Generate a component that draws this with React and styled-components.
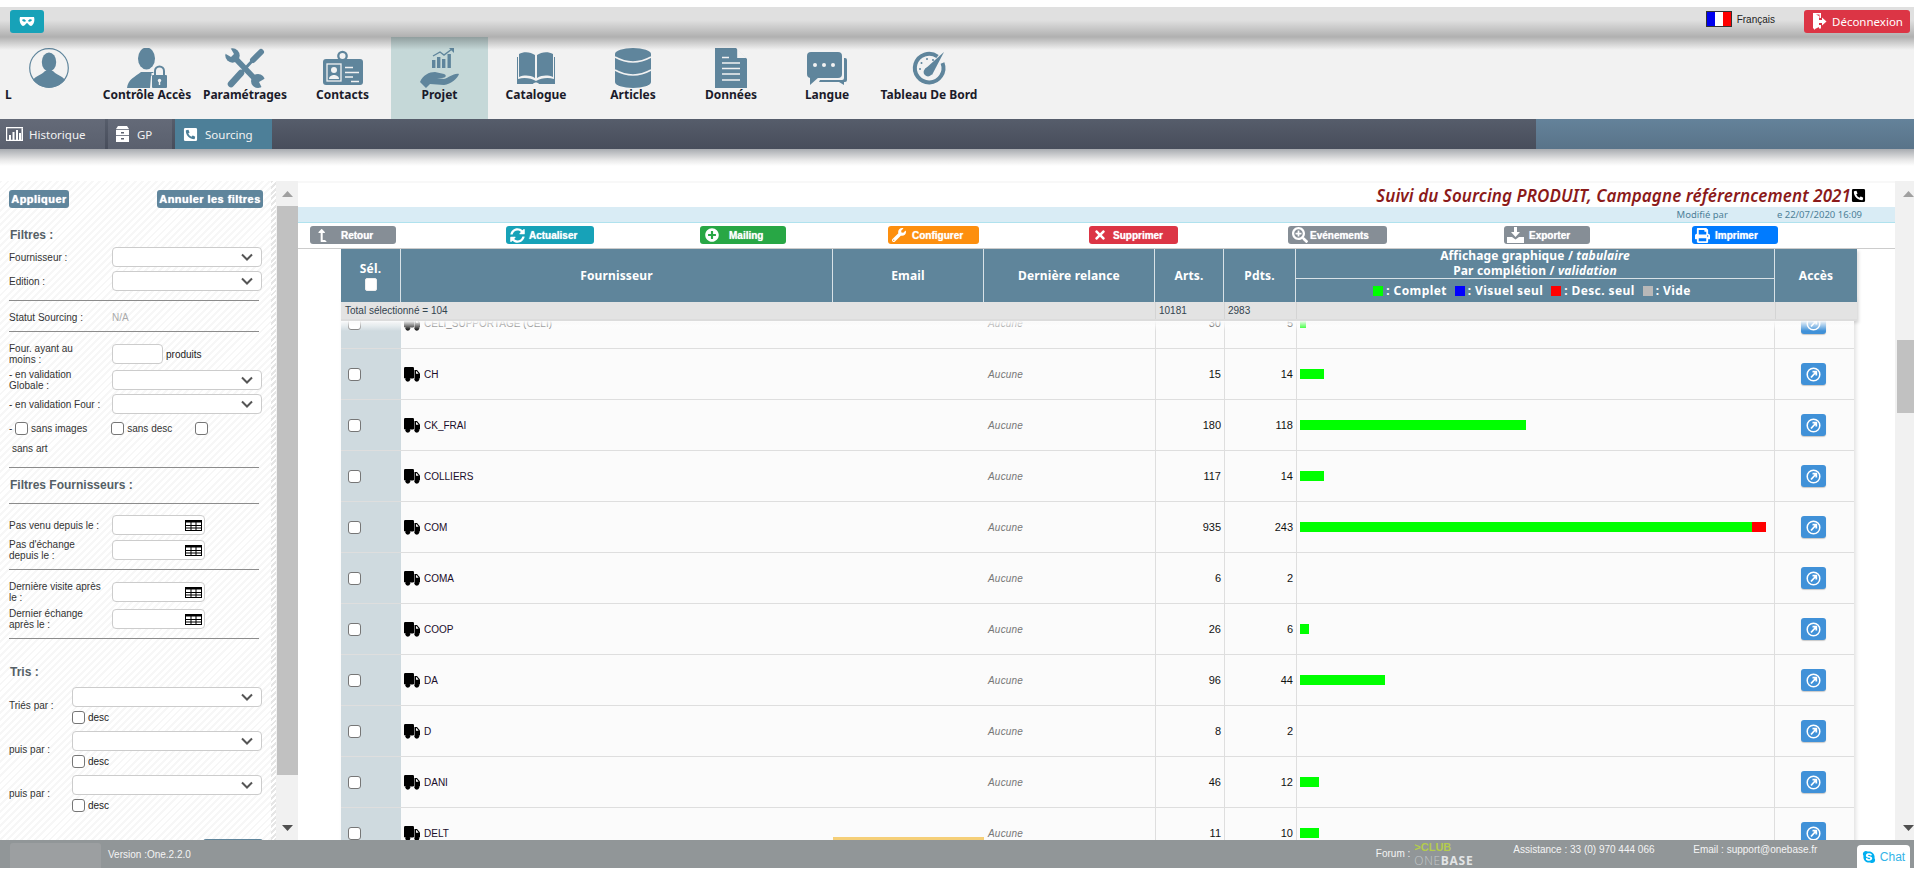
import React from "react";
import styled, { createGlobalStyle } from "styled-components";
import { FaSyncAlt, FaPlusCircle, FaWrench, FaTimes, FaSearchPlus, FaPrint, FaLevelUpAlt, FaPhoneSquareAlt, FaSkype } from "react-icons/fa";

const Global = createGlobalStyle`
  html, body { margin: 0; padding: 0; background: #fff; overflow: hidden; }
  * { box-sizing: border-box; }
`;
const BLUE = "#5f859c";
const Page = styled.div`
  width: 1914px; height: 876px; overflow: hidden; padding-top: 7px;
  display: flex; flex-direction: column; background: #fff;
  font-family: "Liberation Sans", Arial, sans-serif;
`;
const TopBar = styled.header`
  height: 30px; flex: none; display: flex; justify-content: space-between; padding: 3px 4px 0 10px;
  background: linear-gradient(#e0e0e0 0, #e0e0e0 13px, #b0b0b0 100%);
`;
const MaskButton = styled.button`
  width: 34px; height: 23px; border: 0; border-radius: 3px; background: #17a2b8; padding: 0;
  display: flex; align-items: center; justify-content: center;
`;
const TopRight = styled.div`display: flex;`;
const Lang = styled.div`
  display: flex; align-items: center; gap: 5px; font: 10px "Liberation Sans", sans-serif; color: #222; margin-right: 29px; margin-top: 1px; height: 16px;
`;
const LogoutButton = styled.button`
  width: 106px; height: 23px; border: 0; border-radius: 3px; background: #dc3545; color: #fff;
  display: flex; align-items: center; gap: 5px; padding: 0 0 0 9px; font: 11.5px "Noto Sans", sans-serif; white-space: nowrap;
`;
const Nav = styled.nav`
  height: 82px; flex: none; background: #f2f2f2; display: flex; position: relative;
  &::before { content: ""; position: absolute; left: 0; right: 0; top: 0; height: 13px; background: linear-gradient(rgba(0,0,0,.27), rgba(0,0,0,0)); }
`;
const NavItem = styled.div`
  width: ${p => p.$w}px; flex: none; padding-top: 11px; display: flex; flex-direction: column; align-items: center;
  background: ${p => (p.$active ? "#c5d8d8" : "transparent")};
`;
const NavLabel = styled.span`
  font: bold 12px/14px "Noto Sans", sans-serif; color: #1b1b2a; white-space: nowrap;
  align-self: ${p => (p.$left ? "flex-start" : "center")}; padding-left: ${p => (p.$left ? "5px" : "0")};
`;
const SubBar = styled.div`
  height: 30px; flex: none; display: flex; background: linear-gradient(#565d6b, #474d5b);
`;
const SubFill = styled.div`flex: 1;`;
const SubEnd = styled.div`width: 378px; background: linear-gradient(#64829a, #597389);`;
const Tab = styled.div`
  width: ${p => p.$w}px; margin-right: ${p => (p.$active ? 0 : 3)}px; display: flex; align-items: center; gap: ${p => p.$gap}px; padding-left: ${p => p.$pl}px;
  font: 11.5px "Noto Sans", sans-serif; color: #f2f2f2;
  background: ${p => (p.$active ? "#4d7f98" : "linear-gradient(#646a78,#5a606e)")};
`;
const ShadowBand = styled.div`
  height: 32px; flex: none; background: linear-gradient(#a8abb0 0, #e8e8e8 11px, #fff 17px);
`;
const Main = styled.main`height: 659px; flex: none; display: flex; overflow: hidden;`;
const Sidebar = styled.aside`
  width: 276px; flex: none; padding: 9px 13px 0 9px; display: flex; flex-direction: column; overflow: hidden;
  background:
    repeating-linear-gradient(135deg, #e6e6e6 0 2px, #fff 2px 4px) right / 5px 100% no-repeat,
    repeating-linear-gradient(135deg, #f7f7f7 0 2px, #fff 2px 5px);
  font-size: 10px; color: #333;
`;
const ActionRow = styled.div`display: flex; justify-content: space-between; flex: none;`;
const ActionButton = styled.button`
  height: 18px; width: ${p => p.$w}px; border: 0; border-radius: 3px; background: ${BLUE}; color: #fff; padding: 0; flex: none;
  font: bold 11px "Liberation Sans", sans-serif; letter-spacing: .45px; text-shadow: 0 0 1px #fff;
  margin-top: ${p => p.$mt || 0}px; align-self: flex-end;
`;
const SideTitle = styled.h3`
  margin: ${p => p.$mt}px 0 0 1px; height: 20px; flex: none; font: bold 12px/20px "Liberation Sans", sans-serif; color: #555f66;
`;
const Rule = styled.hr`
  margin: ${p => p.$mt}px 0 0; width: 250px; height: 1px; border: 0; background: #8c8c8c; flex: none;
`;
const Field = styled.div`
  margin-top: ${p => p.$mt}px; display: grid; grid-template-columns: 103px 150px; align-items: center; flex: none; height: 20px; line-height: 11px;
`;
const FieldLabel = styled.span`max-width: 92px;`;
const SelectBox = styled.div`
  height: 20px; background: #fff; border: 1px solid #ccc; border-radius: 4px; display: flex; align-items: center; justify-content: flex-end; padding-right: 8px;
`;
const Muted = styled.span`color: #aaa;`;
const NumberWrap = styled.div`display: flex; align-items: center; gap: 3px; color: #222;`;
const TextBox = styled.div`
  height: 20px; width: ${p => p.$w}px; background: #fff; border: 1px solid #ccc; border-radius: 4px;
  display: flex; align-items: center; justify-content: flex-end; padding-right: 2px;
`;
const Check = styled.input.attrs({ type: "checkbox", readOnly: true })`
  appearance: none; width: 13px; height: 13px; margin: 0; flex: none; background: #fff; border: 1px solid #767676; border-radius: 3px;
`;
const CheckRow = styled.div`
  margin-top: ${p => p.$mt}px; height: 13px; display: flex; align-items: center; flex: none;
`;
const CheckLabel = styled.span`margin: 0 ${p => p.$mr}px 0 3px;`;
const Plain = styled.div`margin: 7px 0 0 3px; height: 13px; line-height: 13px; flex: none;`;
const SortRow = styled.div`
  margin-top: ${p => p.$mt}px; display: grid; grid-template-columns: 63px 190px; align-items: center; flex: none;
`;
const SortStack = styled.div`display: flex; flex-direction: column; gap: 4px;`;
const DescLine = styled.div`display: flex; align-items: center; gap: 3px; color: #222; height: 13px;`;
const Gutter = styled.div`
  width: ${p => p.$w}px; flex: none; background: #f1f1f1; display: flex; flex-direction: column; padding-left: ${p => p.$pl}px;
`;
const ArrowSlot = styled.div`
  height: 25px; flex: none; display: flex; align-items: center; justify-content: ${p => p.$end ? "flex-start" : "center"}; padding-left: ${p => p.$end ? "6px" : 0};
`;
const Thumb = styled.div`
  height: ${p => p.$h}px; margin-top: ${p => p.$mt}px; background: #c1c1c1; flex: none;
`;
const Spacer = styled.div`flex: 1;`;
const Content = styled.section`flex: 1; min-width: 0; display: flex; flex-direction: column; background: #fff;`;
const TitleRow = styled.div`
  height: 26px; flex: none; display: flex; align-items: center; justify-content: flex-end; padding-right: 29px; border-top: 2px solid #f8f8f8;
`;
const PageTitle = styled.h1`
  margin: 0; font: italic 600 17px "Noto Sans", sans-serif; color: #8b1a1a; white-space: nowrap; letter-spacing: .08px;
`;
const InfoStrip = styled.div`
  height: 16px; flex: none; background: #d9ecf5; border-bottom: 1px solid #b0e2ee; display: flex; justify-content: flex-end; align-items: center;
  padding-right: 33px; font: 9.5px "Noto Sans", sans-serif; color: #4d7f98; gap: 49px;
`;
const Toolbar = styled.div`
  height: 26px; flex: none; border-bottom: 1px solid #ccc; display: flex; padding: 3px 0 0 12px;
`;
const ToolButton = styled.button`
  width: ${p => p.$w}px; height: 18px; margin-left: ${p => p.$ml}px; padding: 0 0 0 ${p => p.$pl}px; border: 0; border-radius: 3px;
  background: ${p => p.$bg}; color: #fff; display: flex; align-items: center; gap: ${p => p.$gap}px; flex: none;
  font: bold 10px "Liberation Sans", sans-serif; text-shadow: 0 0 1px rgba(255,255,255,.8); white-space: nowrap;
`;
const TableArea = styled.div`flex: 1; min-height: 0; overflow: hidden; margin-top: -3px; padding: 3px 0 0 43px;`;
const COLS = "60px 432px 151px 171px 69px 72px 479px";
const Head = styled.div`position: relative; z-index: 2; width: 1516px;
  box-shadow: 2px 2px 3px rgba(0,0,0,.12);
  &::after { content: ""; position: absolute; left: 0; width: 1513px; top: 100%; height: 10px; background: linear-gradient(rgba(255,255,255,.95), rgba(255,255,255,0)); }
`;
const HeadRow = styled.div`
  display: grid; grid-template-columns: ${COLS} 82px; height: 53px; background: #5f859b; color: #fff;
  font: bold 12px "Noto Sans", sans-serif; letter-spacing: .15px;
`;
const HeadCell = styled.div`
  display: flex; flex-direction: column; align-items: center; justify-content: center; border-right: ${p => (p.$last ? 0 : "1px solid #d8e2e7")}; gap: ${p => p.$gap || 0}px;
`;
const HeadBox = styled.input.attrs({ type: "checkbox", readOnly: true })`
  appearance: none; width: 12px; height: 13px; margin: 0; background: #fff; border: 1px solid #eee; border-radius: 2px;
`;
const ChartHead = styled.div`display: flex; flex-direction: column; border-right: 1px solid #d8e2e7;`;
const ChartTitle = styled.div`
  height: 30px; border-bottom: 1px solid #d8e2e7; text-align: center; white-space: nowrap;
  em { font-style: italic; }
`;
const ChartTitleLine = styled.div`margin-top: ${p => p.$mt}px; line-height: 13px;`;
const Legend = styled.div`flex: 1; display: flex; align-items: center; justify-content: center; gap: 3px; padding-right: 6px; white-space: nowrap; letter-spacing: .4px;`;
const LegendSwatch = styled.i`
  width: 10px; height: 10px; background: ${p => p.$c}; margin-left: ${p => p.$ml || 0}px; flex: none;
`;
const TotalRow = styled.div`
  display: grid; grid-template-columns: ${COLS} 82px; height: 19px; background: #e3e3e3; border-bottom: 2px solid #dcdcdc; font-size: 10px; color: #33444f; line-height: 17px;
`;
const TotalLabel = styled.div`padding-left: 4px; grid-column: 1 / span 4; white-space: nowrap;`;
const TotalNum = styled.div`padding-left: 3px; border-left: 1px solid #d4d4d4;`;
const Rows = styled.div`margin-top: -23px; width: 1513px; box-shadow: 2px 0 4px rgba(0,0,0,.12);`;
const Row = styled.div`
  display: grid; grid-template-columns: ${COLS} 79px; height: 51px; background: #fbfbfb; border-bottom: 1px solid #dedede; align-items: stretch;
`;
const SelCell = styled.div`
  background: #cfdadf; display: flex; align-items: center; padding-left: 7px;
`;
const NameCell = styled.div`
  display: flex; align-items: center; gap: 4px; padding-left: 3px; font-size: 10px; color: ${p => (p.$faded ? "#555" : "#1a0d2a")}; white-space: nowrap;
`;
const EmailCell = styled.div`display: flex; align-items: flex-end;`;
const Banner = styled.div`width: 100%; height: 4px; margin-bottom: 17px; background: #f5cf78;`;
const DateCell = styled.div`
  display: flex; align-items: center; padding-left: 4px; font: italic 10px "Liberation Sans", sans-serif; color: #777; letter-spacing: .2px;
`;
const NumCell = styled.div`
  display: flex; align-items: center; justify-content: flex-end; padding-right: 3px; font-size: 11px; color: #111; border-left: 1px solid #dedede;
`;
const BarCell = styled.div`
  display: flex; align-items: center; padding-left: 3px; border-left: 1px solid #dedede; border-right: 1px solid #dedede;
`;
const BarPart = styled.i`height: 10px; background: ${p => p.$c}; display: block; flex: none;`;
const AccessCell = styled.div`display: flex; align-items: center; padding-left: 26px;`;
const AccessButton = styled.button`
  width: 25px; height: 22px; padding: 0; border: 0; border-radius: 3px; background: #4091d8; display: flex; align-items: center; justify-content: center;
  box-shadow: 0 1px 1px rgba(0,0,0,.2);
`;
const Footer = styled.footer`
  height: 28px; flex: none; background: #919698; display: flex; color: #f4f4f4; font-size: 10px;
`;
const FooterBlock = styled.div`width: 91px; height: 25px; margin: 3px 0 0 10px; background: #9c9fa1; border-radius: 3px 3px 0 0;`;
const FooterText = styled.span`
  margin-left: ${p => p.$ml}px; padding-top: ${p => p.$pt}px; white-space: nowrap; flex: none; width: ${p => p.$w ? p.$w + "px" : "auto"};
`;
const LogoBox = styled.div`
  width: 60px; margin-left: 4px; flex: none; display: flex; flex-direction: column; line-height: 12px; padding-top: 1px; white-space: nowrap;
`;
const LogoClub = styled.span`color: #b4cc4c; font: bold 11px/13px "Liberation Sans", sans-serif;`;
const LogoBase = styled.span`
  color: #c4c8ca; font: 300 12px/13px "Open Sans", sans-serif; letter-spacing: .7px;
  b { font-weight: 700; color: #e3e5e6; }
`;
const ChatButton = styled.div`
  margin-left: auto; margin-right: 4px; margin-top: 5px; width: 53px; height: 23px; background: #fff; border-radius: 4px 4px 0 0;
  display: flex; align-items: center; justify-content: center; gap: 4px; color: #33b4e8; font-size: 12px; flex: none;
`;

const F = p => <svg width="40" height="40" viewBox="0 0 40 40" fill={BLUE} style={{ flex: "none" }} {...p} />;
const BG = "#f2f2f2";
const AvatarIcon = () => (<F><circle cx="20" cy="20" r="19.3" fill="none" stroke={BLUE} strokeWidth="1.2" />
  <ellipse cx="20" cy="14" rx="7.2" ry="9.5" /><path d="M4 32C6 28 13 27 16 23L24 23C27 27 34 28 36 32C32 37 26 39.5 20 39.5C14 39.5 8 37 4 32Z" /></F>);
const AccessIcon = () => (<F><ellipse cx="19.5" cy="10.5" rx="8.5" ry="11" /><path d="M0 40C1 31 8 29 14 24L26 24C27 26 29 27 31 28L24 28L23 40Z" />
  <rect x="24.5" y="25" width="16" height="15" fill={BG} /><rect x="25" y="27" width="15" height="13" rx="1" />
  <path d="M28 27v-4a4.5 4.5 0 0 1 9 0v4" fill="none" stroke={BLUE} strokeWidth="2" /><circle cx="32.5" cy="32.5" r="1.7" fill={BG} /><rect x="31.8" y="33" width="1.4" height="4" fill={BG} /></F>);
const ToolsIcon = () => (<F><g stroke={BLUE} strokeLinecap="round" fill="none">
  <path d="M6 36 16 25" strokeWidth="6.5" /><path d="M16 25 28 12" strokeWidth="3" /><path d="M28 12 36 4" strokeWidth="6" /></g>
  <path d="M9 9 32 33" stroke={BLUE} strokeWidth="5.5" />
  <circle cx="7.5" cy="7.5" r="7.2" /><circle cx="33" cy="33" r="7" />
  <path d="M5 -1 9 6 6 9 -1 5 0 -1Z" fill={BG} /><path d="M41 30 34 34 37 40 41 41Z" fill={BG} /></F>);
const BadgeIcon = () => (<F><circle cx="19.5" cy="8" r="4.2" fill="none" stroke={BLUE} strokeWidth="2.3" />
  <rect x="0" y="11" width="40" height="26" rx="3" /><rect x="4" y="16" width="14" height="17" fill="none" stroke={BG} strokeWidth="1.3" />
  <circle cx="11" cy="22" r="3" fill={BG} /><path d="M6 31c0-3 3-4 5-4s5 1 5 4Z" fill={BG} />
  <path d="M22 19.5h8M22 24.5h14M22 29h8M28 33.5h8" stroke={BG} strokeWidth="1.4" /></F>);
const ProjectIcon = () => (<svg width="40" height="40" viewBox="0 0 40 40" fill={BLUE}>
  <rect x="12" y="12" width="3.4" height="8" /><rect x="17" y="9" width="3.4" height="11" /><rect x="22" y="11" width="3.4" height="9" /><rect x="27.5" y="6" width="3.4" height="14" />
  <path d="M13 8 20 4 24 7 32 1" fill="none" stroke={BLUE} strokeWidth="1.4" /><path d="M29 0h5v5Z" />
  <path d="M0 34C3 27 9 24 15 24L24 26C27 27 26 30 22 30L17 30L24 31C29 30 33 25 39 26C38 30 31 36 24 37L10 36L6 40Z" /></svg>);
const BookIcon = () => (<F><path d="M3 6C8 3 15 4 19 7V30C14 27 8 27 3 29Z" /><path d="M37 6C32 3 25 4 21 7V30C26 27 32 27 37 29Z" />
  <path d="M1 9V36H17C18 34 22 34 23 36H39V9H38V31C32 29 25 30 20 33C15 30 8 29 2 31V9Z" /></F>);
const DbIcon = () => (<F><path d="M2 6a18 6 0 0 1 36 0V34a18 6 0 0 1-36 0Z" /><path d="M2 9Q20 19 38 9M2 22Q20 32 38 22" fill="none" stroke={BG} strokeWidth="1.6" /></F>);
const DocIcon = () => (<F><path d="M4 0H25L36 11V40H4Z" /><path d="M26.2 .5V10H35.5Z" fill={BG} /><path d="M11 9.5h7M11 15h18M11 20.5h18M11 26h18M11 32h18" stroke={BG} strokeWidth="1.3" /></F>);
const ChatIcon = () => (<F><rect x="0" y="4" width="35" height="26" rx="4" /><path d="M3 28V37L12 29Z" />
  <path d="M37 10h1a2 2 0 0 1 2 2v20a2 2 0 0 1-2 2h-1v3L32 34H12L13 32H35a2 2 0 0 0 2-2Z" /><circle cx="8" cy="17" r="2" fill={BG} /><circle cx="17" cy="17" r="2" fill={BG} /><circle cx="26" cy="17" r="2" fill={BG} /></F>);
const GaugeIcon = () => (<F><path d="M28.5 8.5A14.3 14.3 0 1 0 33.5 15" fill="none" stroke={BLUE} strokeWidth="4" />
  <path d="M16 21 35 4 23 27Z" /><circle cx="19" cy="24" r="4.4" />
  <circle cx="11" cy="21" r="1" /><circle cx="12.5" cy="15" r="1" /><circle cx="18" cy="11" r="1" /><circle cx="24" cy="12" r="1" /></F>);
const navItems = [
  { l: "L", I: AvatarIcon, w: 98 }, { l: "Contrôle Accès", I: AccessIcon, w: 98 }, { l: "Paramétrages", I: ToolsIcon, w: 98 },
  { l: "Contacts", I: BadgeIcon, w: 97 }, { l: "Projet", I: ProjectIcon, w: 97 }, { l: "Catalogue", I: BookIcon, w: 96 },
  { l: "Articles", I: DbIcon, w: 98 }, { l: "Données", I: DocIcon, w: 98 }, { l: "Langue", I: ChatIcon, w: 94 }, { l: "Tableau De Bord", I: GaugeIcon, w: 110 },
];

const Chevron = () => (<svg width="12" height="8" viewBox="0 0 12 8"><path d="M1 1.5 6 6.5 11 1.5" fill="none" stroke="#555" strokeWidth="2" /></svg>);
const Calendar = () => (<svg width="17" height="11" viewBox="0 0 17 11"><rect x=".5" y=".5" width="16" height="10" fill="#fff" stroke="#000" /><rect width="17" height="2.5" /><path d="M0 5.500h17M0 8h17M6 0v11M11 0v11" stroke="#000" /></svg>);
const Up = () => (<svg width="11" height="6" viewBox="0 0 11 6"><path d="M5.5 0 11 6H0Z" fill="#a0a0a0" /></svg>);
const Down = () => (<svg width="11" height="6" viewBox="0 0 11 6"><path d="M5.5 6 11 0H0Z" fill="#505050" /></svg>);
const MaskIcon = () => (<svg width="16" height="9" viewBox="0 0 16 9"><path fillRule="evenodd" fill="#fff" d="M1 0H15C16 3 15 8 12 9C10 9 9 6 8 6C7 6 6 9 4 9C1 8 0 3 1 0ZM3 3C4 5 6 5 7 4C6 2 4 2 3 3ZM13 3C12 5 10 5 9 4C10 2 12 2 13 3Z" /></svg>);
const DoorIcon = () => (<svg width="14" height="17" viewBox="0 0 14 17" fill="#fff"><path d="M0 0H8V5H6.5V1.500H3L6 3V14L2 16V17L0 15ZM8 12V15.500H6V12Z" /><path d="M6 7H9V4.500L13.500 8.500 9 12.500V10H6Z" /></svg>);
const Flag = () => (<svg width="26" height="16" viewBox="0 0 26 16"><rect width="9" height="16" fill="#0000ee" /><rect x="9" width="8" height="16" fill="#fff" /><rect x="17" width="9" height="16" fill="#f00" /><rect x=".5" y=".5" width="25" height="15" fill="none" stroke="#333" /></svg>);
const HistIcon = () => (<svg width="17" height="14" viewBox="0 0 17 14" fill="#fff"><path d="M0 0h1.200v12.800H17V14H0ZM15.500 1.300H17V14h-1.500Z" /><rect y="0" width="17" height="1.300" /><rect x="3" y="8" width="2" height="5" /><rect x="6.500" y="5" width="2" height="8" /><rect x="10" y="3" width="2" height="10" /><rect x="13" y="6" width="2" height="7" /></svg>);
const CabinetIcon = () => (<svg width="13" height="16" viewBox="0 0 13 16" fill="#fff"><path d="M2 0H11L13 3H0Z" /><rect y="3.800" width="13" height="5.400" /><rect y="10" width="13" height="6" /><rect x="5" y="6" width="3" height="1.500" fill="#5d6371" /><rect x="5" y="12" width="3" height="1.500" fill="#5d6371" /></svg>);
const GoIcon = () => (<svg width="15" height="15" viewBox="0 0 15 15" fill="none" stroke="#fff"><circle cx="7.500" cy="7.500" r="6.300" strokeWidth="1.500" /><path d="M5 10.500 10 5M6.500 4.700H10.300V8.500" strokeWidth="1.800" /></svg>);
const ExportIcon = () => (<svg width="17" height="16" viewBox="0 0 17 16" fill="#fff"><path d="M7 0H10V5H13L8.500 10 4 5H7Z" /><path d="M0 10H5L8.500 12.500 12 10H17V16H0Z" /></svg>);
const TruckIcon = () => (<svg width="16" height="15" viewBox="0 0 16 15" style={{ flex: "none" }}><rect width="10" height="11.500" rx="1.200" /><path d="M10.500 3H13L16 6.500V11.500H10.500Z" /><path d="M12 4.300H12.800L14.600 6.800H12Z" fill="#fff" /><circle cx="3.800" cy="12.300" r="2.400" /><circle cx="12.800" cy="12.300" r="2.400" /></svg>);

const tools = [
  { t: "Retour", w: 86, ml: 0, bg: "#868e96", pl: 6, gap: 12, I: () => <FaLevelUpAlt size={13} style={{ transform: "scaleX(-1)" }} /> },
  { t: "Actualiser", w: 88, ml: 110, bg: "#17a2b8", pl: 4, gap: 4, I: () => <FaSyncAlt size={15} /> },
  { t: "Mailing", w: 86, ml: 106, bg: "#28a745", pl: 5, gap: 10, I: () => <FaPlusCircle size={14} /> },
  { t: "Configurer", w: 91, ml: 102, bg: "#fd8f0e", pl: 4, gap: 6, I: () => <FaWrench size={14} /> },
  { t: "Supprimer", w: 89, ml: 110, bg: "#dc3545", pl: 4, gap: 6, I: () => <FaTimes size={14} /> },
  { t: "Evénements", w: 99, ml: 110, bg: "#868e96", pl: 4, gap: 2, I: () => <FaSearchPlus size={16} /> },
  { t: "Exporter", w: 86, ml: 117, bg: "#868e96", pl: 3, gap: 5, I: () => <ExportIcon /> },
  { t: "Imprimer", w: 86, ml: 102, bg: "#007bff", pl: 3, gap: 5, I: () => <FaPrint size={15} /> },
];
const rows = [
  ["CELI_SUPPORTAGE (CELI)", 30, 5, 6, 0],
  ["CH", 15, 14, 24, 0], ["CK_FRAI", 180, 118, 226, 0], ["COLLIERS", 117, 14, 24, 0], ["COM", 935, 243, 452, 14],
  ["COMA", 6, 2, 0, 0], ["COOP", 26, 6, 9, 0], ["DA", 96, 44, 85, 0], ["D", 8, 2, 0, 0], ["DANI", 46, 12, 19, 0], ["DELT", 11, 10, 19, 0],
];

const SelectField = ({ label, mt }) => (<Field $mt={mt}><FieldLabel>{label}</FieldLabel><SelectBox><Chevron /></SelectBox></Field>);
const DateField = ({ label, mt }) => (<Field $mt={mt}><FieldLabel>{label}</FieldLabel><TextBox $w={93}><Calendar /></TextBox></Field>);
const SortField = ({ label, mt }) => (<SortRow $mt={mt}><span>{label}</span><SortStack><SelectBox><Chevron /></SelectBox><DescLine><Check /><span>desc</span></DescLine></SortStack></SortRow>);

export default function App() {
  return (
    <Page>
      <Global />
      <TopBar>
        <MaskButton><MaskIcon /></MaskButton>
        <TopRight>
          <Lang><Flag /><span>Français</span></Lang>
          <LogoutButton><DoorIcon />Déconnexion</LogoutButton>
        </TopRight>
      </TopBar>
      <Nav>
        {navItems.map(({ l, I, w }, i) => (
          <NavItem key={l} $w={w} $active={l === "Projet"}><I /><NavLabel $left={i === 0}>{l}</NavLabel></NavItem>
        ))}
      </Nav>
      <SubBar>
        <Tab $w={105} $pl={6} $gap={6}><HistIcon />Historique</Tab>
        <Tab $w={64} $pl={8} $gap={8}><CabinetIcon />GP</Tab>
        <Tab $w={97} $pl={8} $gap={7} $active><FaPhoneSquareAlt size={15} color="#fff" />Sourcing</Tab>
        <SubFill />
        <SubEnd />
      </SubBar>
      <ShadowBand />
      <Main>
        <Sidebar>
          <ActionRow><ActionButton $w={60}>Appliquer</ActionButton><ActionButton $w={106}>Annuler les filtres</ActionButton></ActionRow>
          <SideTitle $mt={17}>Filtres :</SideTitle>
          <SelectField label="Fournisseur :" mt={2} />
          <SelectField label="Edition :" mt={4} />
          <Rule $mt={9} />
          <Field $mt={6}><FieldLabel>Statut Sourcing :</FieldLabel><Muted>N/A</Muted></Field>
          <Rule $mt={4} />
          <Field $mt={11}><FieldLabel>Four. ayant au moins :</FieldLabel><NumberWrap><TextBox $w={51} />produits</NumberWrap></Field>
          <SelectField label="- en validation Globale :" mt={6} />
          <SelectField label="- en validation Four :" mt={5} />
          <CheckRow $mt={8}>-&nbsp;<Check /><CheckLabel $mr={24}>sans images</CheckLabel><Check /><CheckLabel $mr={23}>sans desc</CheckLabel><Check /></CheckRow>
          <Plain>sans art</Plain>
          <Rule $mt={12} />
          <SideTitle $mt={7}>Filtres Fournisseurs :</SideTitle>
          <Rule $mt={8} />
          <DateField label="Pas venu depuis le :" mt={11} />
          <DateField label="Pas d'échange depuis le :" mt={4} />
          <Rule $mt={10} />
          <DateField label="Dernière visite après le :" mt={11} />
          <DateField label="Dernier échange après le :" mt={7} />
          <Rule $mt={10} />
          <SideTitle $mt={23}>Tris :</SideTitle>
          <SortField label="Triés par :" mt={5} />
          <SortField label="puis par :" mt={7} />
          <SortField label="puis par :" mt={7} />
          <ActionButton $w={60} $mt={27} />
        </Sidebar>
        <Gutter $w={22} $pl={1}>
          <ArrowSlot><Up /></ArrowSlot>
          <Thumb $h={569} $mt={0} />
          <Spacer />
          <ArrowSlot><Down /></ArrowSlot>
        </Gutter>
        <Content>
          <TitleRow><PageTitle>Suivi du Sourcing PRODUIT, Campagne référerncement 2021</PageTitle><FaPhoneSquareAlt size={15} color="#000" /></TitleRow>
          <InfoStrip><span>Modifié par</span><span>e 22/07/2020 16:09</span></InfoStrip>
          <Toolbar>
            {tools.map(({ t, w, ml, bg, pl, gap, I }) => (
              <ToolButton key={t} $w={w} $ml={ml} $bg={bg} $pl={pl} $gap={gap}><I />{t}</ToolButton>
            ))}
          </Toolbar>
          <TableArea>
            <Head>
              <HeadRow>
                <HeadCell $gap={1}>Sél.<HeadBox /></HeadCell>
                <HeadCell>Fournisseur</HeadCell>
                <HeadCell>Email</HeadCell>
                <HeadCell>Dernière relance</HeadCell>
                <HeadCell>Arts.</HeadCell>
                <HeadCell>Pdts.</HeadCell>
                <ChartHead>
                  <ChartTitle>
                    <ChartTitleLine $mt={0}>Affichage graphique / <em>tabulaire</em></ChartTitleLine>
                    <ChartTitleLine $mt={2}>Par complétion / <em>validation</em></ChartTitleLine>
                  </ChartTitle>
                  <Legend>
                    <LegendSwatch $c="#00ff00" />: Complet
                    <LegendSwatch $c="#0000ff" $ml={5} />: Visuel seul
                    <LegendSwatch $c="#ff0000" $ml={5} />: Desc. seul
                    <LegendSwatch $c="#b8b8b8" $ml={5} />: Vide
                  </Legend>
                </ChartHead>
                <HeadCell $last>Accès</HeadCell>
              </HeadRow>
              <TotalRow>
                <TotalLabel>Total sélectionné = 104</TotalLabel>
                <TotalNum>10181</TotalNum><TotalNum>2983</TotalNum><TotalNum /><TotalNum />
              </TotalRow>
            </Head>
            <Rows>
              {rows.map(([name, arts, pdts, g, r], i) => (
                <Row key={name}>
                  <SelCell><Check /></SelCell>
                  <NameCell $faded={i === 0}><TruckIcon />{name}</NameCell>
                  <EmailCell>{i === rows.length - 1 && <Banner />}</EmailCell>
                  <DateCell>Aucune</DateCell>
                  <NumCell>{arts}</NumCell>
                  <NumCell>{pdts}</NumCell>
                  <BarCell>
                    {g > 0 && <BarPart $c="#00ff00" style={{ width: g }} />}
                    {r > 0 && <BarPart $c="#ff0000" style={{ width: r }} />}
                  </BarCell>
                  <AccessCell><AccessButton><GoIcon /></AccessButton></AccessCell>
                </Row>
              ))}
            </Rows>
          </TableArea>
        </Content>
        <Gutter $w={19} $pl={2}>
          <ArrowSlot $end><Up /></ArrowSlot>
          <Thumb $h={73} $mt={134} />
          <Spacer />
          <ArrowSlot $end><Down /></ArrowSlot>
        </Gutter>
      </Main>
      <Footer>
        <FooterBlock />
        <FooterText $ml={7} $pt={9}>Version :One.2.2.0</FooterText>
        <FooterText $ml={1185} $pt={8}>Forum :</FooterText>
        <LogoBox><LogoClub>&gt;CLUB</LogoClub><LogoBase>ONE<b>BASE</b></LogoBase></LogoBox>
        <FooterText $ml={39} $pt={4} $w={180}>Assistance : 33 (0) 970 444 066</FooterText>
        <FooterText $ml={0} $pt={4}>Email : support@onebase.fr</FooterText>
        <ChatButton><FaSkype size={14} color="#00aff0" />Chat</ChatButton>
      </Footer>
    </Page>
  );
}
